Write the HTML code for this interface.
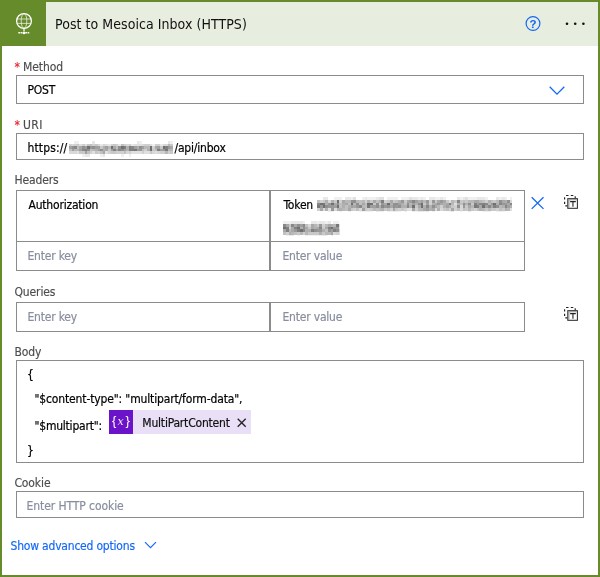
<!DOCTYPE html>
<html>
<head>
<meta charset="utf-8">
<title>Post to Mesoica Inbox (HTTPS)</title>
<style>
html,body{margin:0;padding:0;background:#fff;}
body{width:600px;height:577px;overflow:hidden;position:relative;
  font-family:"DejaVu Sans Condensed","Liberation Sans",sans-serif;font-size:12px;letter-spacing:-0.2px;color:#000;}
#wrap{position:absolute;left:0;top:0;width:600px;height:577px;will-change:transform;}
.abs{position:absolute;}
#card{position:absolute;left:0;top:0;width:596px;height:573px;border:2px solid #668b2b;background:#fff;}
#hdr{position:absolute;left:0;top:0;width:600px;height:46px;background:#e8eedf;border:2px solid #668b2b;border-bottom:0;box-sizing:border-box;}
#ico{position:absolute;left:0;top:0;width:46px;height:46px;background:#668b2b;}
#title{position:absolute;left:55px;top:14px;font-size:14px;line-height:20px;letter-spacing:0.05px;color:#111;white-space:nowrap;}
.lbl{position:absolute;left:14.4px;line-height:16px;color:#4d4d4d;letter-spacing:-0.1px;-webkit-text-stroke:0.15px currentColor;white-space:nowrap;}
.req{color:#e8212b;}
.box{position:absolute;box-sizing:border-box;border:1px solid #8b8b8b;background:#fff;}
.txt{position:absolute;line-height:16px;white-space:nowrap;color:#000;-webkit-text-stroke:0.2px currentColor;}
.ph{color:#888e9e;}
a.adv{position:absolute;left:10.5px;top:538.2px;line-height:16px;color:#1267f8;letter-spacing:-0.2px;-webkit-text-stroke:0.15px currentColor;text-decoration:none;white-space:nowrap;}
</style>
</head>
<body>
<div id="wrap">
<div id="card"></div>
<div id="hdr"></div>
<div id="ico">
<svg class="abs" style="left:0;top:0" width="46" height="46" viewBox="0 0 46 46" fill="none" stroke="#fff" stroke-width="1.3">
<circle cx="24" cy="21" r="7.4"/>
<ellipse cx="24" cy="21" rx="2.8" ry="7.4" stroke-width="0.8" opacity="0.85"/>
<path d="M17.2 19h13.6M17.2 23.4h13.6" stroke-width="0.8" opacity="0.85"/>
<path d="M24 28.4v3" stroke-width="1.3"/>
<path d="M18.3 32.7h11" stroke-width="1.4" stroke-dasharray="1.8 0.5" opacity="0.95"/>
<circle cx="24" cy="33" r="1.3" fill="#fff" stroke="none"/>
</svg>
</div>
<div id="title">Post to Mesoica Inbox (HTTPS)</div>
<svg class="abs" style="left:520px;top:10px" width="74" height="28" viewBox="520 10 74 28">
<circle cx="533" cy="23.5" r="6.9" fill="none" stroke="#1267f8" stroke-width="1.2"/>
<text x="533" y="28.1" text-anchor="middle" font-family="Liberation Sans, sans-serif" font-weight="bold" font-size="11.5" letter-spacing="0" fill="#1267f8">?</text>
<circle cx="567" cy="23.8" r="1.3" fill="#111"/>
<circle cx="575.2" cy="23.8" r="1.3" fill="#111"/>
<circle cx="583.4" cy="23.8" r="1.3" fill="#111"/>
</svg>

<div class="lbl" style="top:59px"><span class="req">*</span>&nbsp;Method</div>
<div class="box" style="left:16px;top:75px;width:568px;height:29px"></div>
<div class="txt" style="left:27.5px;top:82px">POST</div>
<svg class="abs" style="left:547px;top:84px" width="20" height="14" viewBox="547 84 20 14"><path d="M549.7 86.8l7.3 7.3l7.3-7.3" fill="none" stroke="#1267f8" stroke-width="1.3"/></svg>

<div class="lbl" style="top:117px"><span class="req">*</span>&nbsp;<span style="letter-spacing:0.4px">URI</span></div>
<div class="box" style="left:16px;top:133px;width:568px;height:27px"></div>
<div class="txt" style="left:27.4px;top:139.5px;letter-spacing:0.15px">https://</div>
<div class="txt" style="left:174.5px;top:139.5px">/api/inbox</div>

<div class="lbl" style="top:171.5px">Headers</div>
<div class="box" style="left:16px;top:190px;width:254px;height:52px"></div>
<div class="box" style="left:270px;top:190px;width:255px;height:52px"></div>
<div class="box" style="left:16px;top:241px;width:254px;height:30px"></div>
<div class="box" style="left:270px;top:241px;width:255px;height:30px"></div>
<div class="txt" style="left:28.5px;top:196.5px">Authorization</div>
<div class="txt" style="left:283.5px;top:196.5px">Token</div>
<div class="txt ph" style="left:27.5px;top:247.5px">Enter key</div>
<div class="txt ph" style="left:282.5px;top:247.5px">Enter value</div>

<div class="lbl" style="top:283.5px">Queries</div>
<div class="box" style="left:16px;top:302px;width:254px;height:30px"></div>
<div class="box" style="left:270px;top:302px;width:255px;height:30px"></div>
<div class="txt ph" style="left:27.5px;top:308.5px">Enter key</div>
<div class="txt ph" style="left:282.5px;top:308.5px">Enter value</div>

<div class="lbl" style="top:344px">Body</div>
<div class="box" style="left:16px;top:360px;width:568px;height:103px"></div>
<div class="txt" style="left:27px;top:367px">{</div>
<div class="txt" style="left:34.5px;top:391px;letter-spacing:-0.14px">"$content-type": "multipart/form-data",</div>
<div class="txt" style="left:34.5px;top:417.5px;letter-spacing:-0.22px">"$multipart":</div>
<div class="abs" style="left:109px;top:410px;width:24px;height:24px;background:#6b13c8"></div>
<div class="abs" style="left:133px;top:410px;width:118px;height:24px;background:#e9dff6"></div>
<svg class="abs" style="left:109px;top:410px" width="24" height="24" viewBox="109 410 24 24" fill="#fff">
<text x="112.1" y="425.2" font-family="Liberation Sans, sans-serif" font-size="13" letter-spacing="0">{</text>
<text x="117.6" y="425.1" font-family="DejaVu Serif, Liberation Serif, serif" font-style="italic" font-size="11" letter-spacing="0" opacity="0.92">x</text>
<text x="125.5" y="425.2" font-family="Liberation Sans, sans-serif" font-size="13" letter-spacing="0">}</text>
</svg>
<div class="txt" style="left:142.3px;top:414.5px;color:#111">MultiPartContent</div>
<svg class="abs" style="left:235px;top:416px" width="14" height="14" viewBox="235 416 14 14"><path d="M237.7 418.8l8 8M245.7 418.8l-8 8" fill="none" stroke="#222" stroke-width="1.3"/></svg>
<div class="txt" style="left:27px;top:443px">}</div>

<div class="lbl" style="top:474.5px">Cookie</div>
<div class="box" style="left:16px;top:491px;width:568px;height:27px"></div>
<div class="txt ph" style="left:26.5px;top:498px;letter-spacing:-0.08px">Enter HTTP cookie</div>

<!--MOSAIC--><svg class="abs" style="left:0;top:0" width="600" height="577" viewBox="0 0 600 577" shape-rendering="crispEdges"><path fill="#707070" d="M87 146h3v3h-3zM111 146h2v3h-2zM121 146h3v3h-3zM150 146h2v3h-2zM163 146h2v3h-2zM150 149h2v2h-2z"/><path fill="#787878" d="M134 149h3v2h-3zM165 149h3v2h-3z"/><path fill="#808080" d="M124 146h2v3h-2zM129 146h2v3h-2zM165 146h3v3h-3zM85 149h2v2h-2zM113 149h3v2h-3zM129 149h2v2h-2zM131 149h3v2h-3zM157 149h3v2h-3z"/><path fill="#888888" d="M74 146h3v3h-3zM131 146h3v3h-3zM82 149h3v2h-3zM118 149h3v2h-3z"/><path fill="#909090" d="M72 146h2v3h-2zM82 146h3v3h-3zM92 146h3v3h-3zM118 146h3v3h-3zM139 146h3v3h-3zM87 149h3v2h-3zM100 149h3v2h-3zM121 149h3v2h-3z"/><path fill="#989898" d="M90 146h2v3h-2zM168 146h2v3h-2zM139 149h3v2h-3zM163 149h2v2h-2z"/><path fill="#a0a0a0" d="M69 146h3v3h-3zM85 146h2v3h-2zM95 146h3v3h-3zM98 146h2v3h-2zM105 146h3v3h-3zM134 146h3v3h-3zM142 146h2v3h-2zM157 146h3v3h-3zM72 149h2v2h-2zM79 149h3v2h-3zM98 149h2v2h-2zM111 149h2v2h-2zM124 149h2v2h-2zM137 149h2v2h-2zM160 149h3v2h-3zM85 151h2v3h-2z"/><path fill="#a8a8a8" d="M79 146h3v3h-3zM113 146h3v3h-3zM155 146h2v3h-2zM170 146h3v3h-3zM105 149h3v2h-3zM116 149h2v2h-2zM103 151h2v3h-2z"/><path fill="#b0b0b0" d="M103 146h2v3h-2zM126 146h3v3h-3zM137 146h2v3h-2zM95 149h3v2h-3zM103 149h2v2h-2zM126 149h3v2h-3zM147 149h3v2h-3z"/><path fill="#b8b8b8" d="M168 144h2v2h-2zM108 146h3v3h-3zM144 146h3v3h-3zM147 146h3v3h-3zM74 149h3v2h-3zM77 149h2v2h-2zM92 149h3v2h-3zM168 149h2v2h-2zM170 149h3v2h-3zM165 151h3v3h-3z"/><path fill="#c0c0c0" d="M90 144h2v2h-2zM121 144h3v2h-3zM77 146h2v3h-2zM116 146h2v3h-2zM69 149h3v2h-3zM90 149h2v2h-2zM142 149h2v2h-2zM155 149h2v2h-2zM87 151h3v3h-3zM100 151h3v3h-3zM124 151h2v3h-2z"/><path fill="#c8c8c8" d="M77 144h2v2h-2zM87 144h3v2h-3zM95 144h3v2h-3zM113 144h3v2h-3zM170 144h3v2h-3zM100 146h3v3h-3zM160 146h3v3h-3zM108 149h3v2h-3zM152 149h3v2h-3zM79 151h3v3h-3zM82 151h3v3h-3zM95 151h3v3h-3zM111 151h2v3h-2zM113 151h3v3h-3zM150 151h2v3h-2zM170 151h3v3h-3z"/><path fill="#d0d0d0" d="M69 144h3v2h-3zM74 144h3v2h-3zM82 144h3v2h-3zM92 144h3v2h-3zM111 144h2v2h-2zM116 144h2v2h-2zM124 144h2v2h-2zM129 144h2v2h-2zM144 144h3v2h-3zM147 144h3v2h-3zM155 144h2v2h-2zM157 144h3v2h-3zM152 146h3v3h-3zM144 149h3v2h-3zM90 151h2v3h-2zM98 151h2v3h-2zM108 151h3v3h-3zM116 151h2v3h-2zM118 151h3v3h-3zM121 151h3v3h-3zM129 151h2v3h-2zM142 151h2v3h-2zM160 151h3v3h-3zM163 151h2v3h-2zM168 151h2v3h-2z"/><path fill="#d8d8d8" d="M72 144h2v2h-2zM98 144h2v2h-2zM103 144h2v2h-2zM126 144h3v2h-3zM142 144h2v2h-2zM163 144h2v2h-2zM165 144h3v2h-3zM69 151h3v3h-3zM72 151h2v3h-2zM74 151h3v3h-3zM126 151h3v3h-3zM152 151h3v3h-3zM157 151h3v3h-3z"/><path fill="#e0e0e0" d="M79 144h3v2h-3zM85 144h2v2h-2zM105 144h3v2h-3zM134 144h3v2h-3zM137 144h2v2h-2zM139 144h3v2h-3zM150 144h2v2h-2zM77 151h2v3h-2zM92 151h3v3h-3zM105 151h3v3h-3zM131 151h3v3h-3zM134 151h3v3h-3zM137 151h2v3h-2zM139 151h3v3h-3zM144 151h3v3h-3zM147 151h3v3h-3zM155 151h2v3h-2z"/><path fill="#e8e8e8" d="M92 141h3v3h-3zM137 141h2v3h-2zM168 141h2v3h-2zM100 144h3v2h-3zM108 144h3v2h-3zM118 144h3v2h-3zM131 144h3v2h-3zM160 144h3v2h-3zM85 154h2v3h-2zM87 154h3v3h-3zM103 154h2v3h-2z"/><path fill="#f0f0f0" d="M74 141h3v3h-3zM77 141h2v3h-2zM139 141h3v3h-3zM170 141h3v3h-3zM152 144h3v2h-3zM82 154h3v3h-3zM100 154h3v3h-3zM121 154h3v3h-3zM129 154h2v3h-2z"/><path fill="#707070" d="M337 200h2v3h-2zM320 203h3v2h-3zM331 203h3v2h-3zM351 203h2v2h-2zM367 203h3v2h-3zM370 203h3v2h-3zM387 203h3v2h-3zM421 203h2v2h-2zM493 203h3v2h-3zM323 205h2v3h-2zM337 205h2v3h-2zM412 205h3v3h-3zM421 205h2v3h-2zM482 205h3v3h-3z"/><path fill="#787878" d="M323 203h2v2h-2zM317 205h3v3h-3zM367 205h3v3h-3zM474 205h3v3h-3z"/><path fill="#808080" d="M381 200h3v3h-3zM449 203h2v2h-2zM474 203h3v2h-3zM482 203h3v2h-3zM477 205h2v3h-2zM493 205h3v3h-3z"/><path fill="#888888" d="M412 200h3v3h-3zM457 200h3v3h-3zM317 203h3v2h-3zM479 203h3v2h-3zM485 203h3v2h-3zM499 203h3v2h-3zM510 203h2v2h-2zM359 205h3v3h-3zM381 205h3v3h-3zM407 205h2v3h-2zM426 205h3v3h-3zM488 205h3v3h-3zM505 205h2v3h-2z"/><path fill="#909090" d="M351 200h2v3h-2zM353 200h3v3h-3zM499 200h3v3h-3zM507 200h3v3h-3zM337 203h2v2h-2zM356 203h3v2h-3zM376 203h3v2h-3zM393 203h2v2h-2zM395 203h3v2h-3zM407 203h2v2h-2zM418 203h3v2h-3zM463 203h2v2h-2zM468 203h3v2h-3zM325 205h3v3h-3zM376 205h3v3h-3zM387 205h3v3h-3zM393 205h2v3h-2zM398 205h3v3h-3zM432 205h3v3h-3zM457 205h3v3h-3zM496 205h3v3h-3z"/><path fill="#989898" d="M401 200h3v3h-3zM426 200h3v3h-3zM432 200h3v3h-3zM440 200h3v3h-3zM328 203h3v2h-3zM381 203h3v2h-3zM437 203h3v2h-3zM491 203h2v2h-2zM502 203h3v2h-3zM505 203h2v2h-2zM320 205h3v3h-3zM328 205h3v3h-3zM331 205h3v3h-3zM356 205h3v3h-3zM384 205h3v3h-3zM395 205h3v3h-3zM463 205h2v3h-2zM331 208h3v3h-3z"/><path fill="#a0a0a0" d="M409 200h3v3h-3zM415 200h3v3h-3zM421 200h2v3h-2zM398 203h3v2h-3zM412 203h3v2h-3zM426 203h3v2h-3zM477 203h2v2h-2zM334 205h3v3h-3zM351 205h2v3h-2zM370 205h3v3h-3zM373 205h3v3h-3zM446 205h3v3h-3zM485 205h3v3h-3zM507 205h3v3h-3zM362 208h3v3h-3zM426 208h3v3h-3z"/><path fill="#a8a8a8" d="M342 200h3v3h-3zM373 200h3v3h-3zM390 200h3v3h-3zM407 200h2v3h-2zM437 200h3v3h-3zM443 200h3v3h-3zM474 200h3v3h-3zM477 200h2v3h-2zM502 200h3v3h-3zM334 203h3v2h-3zM345 203h3v2h-3zM362 203h3v2h-3zM384 203h3v2h-3zM435 203h2v2h-2zM440 203h3v2h-3zM446 203h3v2h-3zM507 203h3v2h-3zM353 205h3v3h-3zM390 205h3v3h-3zM418 205h3v3h-3zM435 205h2v3h-2zM468 205h3v3h-3zM479 205h3v3h-3zM491 205h2v3h-2zM320 208h3v3h-3zM348 208h3v3h-3zM393 208h2v3h-2zM412 208h3v3h-3zM423 208h3v3h-3zM432 208h3v3h-3zM451 208h3v3h-3z"/><path fill="#b0b0b0" d="M325 200h3v3h-3zM331 200h3v3h-3zM367 200h3v3h-3zM379 200h2v3h-2zM398 200h3v3h-3zM418 200h3v3h-3zM488 200h3v3h-3zM505 200h2v3h-2zM325 203h3v2h-3zM342 203h3v2h-3zM390 203h3v2h-3zM401 203h3v2h-3zM415 203h3v2h-3zM432 203h3v2h-3zM443 203h3v2h-3zM457 203h3v2h-3zM465 203h3v2h-3zM496 203h3v2h-3zM342 205h3v3h-3zM348 205h3v3h-3zM379 205h2v3h-2zM401 205h3v3h-3zM404 205h3v3h-3zM409 205h3v3h-3zM423 205h3v3h-3zM429 205h3v3h-3zM443 205h3v3h-3zM449 205h2v3h-2zM502 205h3v3h-3zM510 205h2v3h-2zM325 208h3v3h-3zM337 208h2v3h-2zM339 208h3v3h-3zM381 208h3v3h-3zM429 208h3v3h-3zM437 208h3v3h-3zM479 208h3v3h-3zM505 208h2v3h-2z"/><path fill="#b8b8b8" d="M345 200h3v3h-3zM348 200h3v3h-3zM356 200h3v3h-3zM362 200h3v3h-3zM423 200h3v3h-3zM451 200h3v3h-3zM468 200h3v3h-3zM471 200h3v3h-3zM479 200h3v3h-3zM496 200h3v3h-3zM353 203h3v2h-3zM409 203h3v2h-3zM451 203h3v2h-3zM488 203h3v2h-3zM362 205h3v3h-3zM437 205h3v3h-3zM471 205h3v3h-3zM499 205h3v3h-3zM342 208h3v3h-3zM373 208h3v3h-3zM379 208h2v3h-2zM418 208h3v3h-3zM421 208h2v3h-2zM468 208h3v3h-3zM482 208h3v3h-3zM488 208h3v3h-3zM507 208h3v3h-3z"/><path fill="#c0c0c0" d="M317 200h3v3h-3zM359 200h3v3h-3zM376 200h3v3h-3zM395 200h3v3h-3zM463 200h2v3h-2zM482 200h3v3h-3zM491 200h2v3h-2zM339 203h3v2h-3zM348 203h3v2h-3zM359 203h3v2h-3zM365 203h2v2h-2zM404 203h3v2h-3zM460 203h3v2h-3zM339 205h3v3h-3zM345 205h3v3h-3zM365 205h2v3h-2zM345 208h3v3h-3zM356 208h3v3h-3zM376 208h3v3h-3zM387 208h3v3h-3zM446 208h3v3h-3zM457 208h3v3h-3zM463 208h2v3h-2zM477 208h2v3h-2zM499 208h3v3h-3z"/><path fill="#c8c8c8" d="M323 200h2v3h-2zM334 200h3v3h-3zM370 200h3v3h-3zM387 200h3v3h-3zM393 200h2v3h-2zM404 200h3v3h-3zM435 200h2v3h-2zM446 200h3v3h-3zM454 200h3v3h-3zM460 200h3v3h-3zM465 200h3v3h-3zM493 200h3v3h-3zM373 203h3v2h-3zM423 203h3v2h-3zM471 203h3v2h-3zM415 205h3v3h-3zM451 205h3v3h-3zM465 205h3v3h-3zM351 208h2v3h-2zM365 208h2v3h-2zM370 208h3v3h-3zM384 208h3v3h-3zM395 208h3v3h-3zM401 208h3v3h-3zM443 208h3v3h-3zM465 208h3v3h-3zM471 208h3v3h-3zM485 208h3v3h-3zM491 208h2v3h-2zM493 208h3v3h-3zM502 208h3v3h-3z"/><path fill="#d0d0d0" d="M320 200h3v3h-3zM339 200h3v3h-3zM365 200h2v3h-2zM384 200h3v3h-3zM429 200h3v3h-3zM485 200h3v3h-3zM379 203h2v2h-2zM429 203h3v2h-3zM440 205h3v3h-3zM454 205h3v3h-3zM317 208h3v3h-3zM353 208h3v3h-3zM367 208h3v3h-3zM390 208h3v3h-3zM398 208h3v3h-3zM404 208h3v3h-3zM415 208h3v3h-3zM449 208h2v3h-2zM454 208h3v3h-3zM474 208h3v3h-3zM496 208h3v3h-3z"/><path fill="#d8d8d8" d="M328 200h3v3h-3zM510 200h2v3h-2zM460 205h3v3h-3zM323 208h2v3h-2zM334 208h3v3h-3zM359 208h3v3h-3zM435 208h2v3h-2zM440 208h3v3h-3zM460 208h3v3h-3z"/><path fill="#e0e0e0" d="M353 197h3v3h-3zM379 197h2v3h-2zM381 197h3v3h-3zM409 197h3v3h-3zM465 197h3v3h-3zM449 200h2v3h-2zM454 203h3v2h-3zM328 208h3v3h-3zM407 208h2v3h-2zM409 208h3v3h-3zM510 208h2v3h-2z"/><path fill="#e8e8e8" d="M323 197h2v3h-2zM325 197h3v3h-3zM345 197h3v3h-3zM348 197h3v3h-3zM365 197h2v3h-2zM376 197h3v3h-3zM412 197h3v3h-3zM415 197h3v3h-3zM421 197h2v3h-2zM429 197h3v3h-3zM432 197h3v3h-3zM440 197h3v3h-3zM457 197h3v3h-3zM463 197h2v3h-2zM477 197h2v3h-2zM479 197h3v3h-3zM482 197h3v3h-3zM496 197h3v3h-3zM502 197h3v3h-3zM376 211h3v1h-3zM418 211h3v1h-3zM421 211h2v1h-2zM426 211h3v1h-3zM451 211h3v1h-3zM468 211h3v1h-3z"/><path fill="#f0f0f0" d="M334 197h3v3h-3zM337 197h2v3h-2zM339 197h3v3h-3zM351 197h2v3h-2zM362 197h3v3h-3zM367 197h3v3h-3zM370 197h3v3h-3zM373 197h3v3h-3zM387 197h3v3h-3zM390 197h3v3h-3zM393 197h2v3h-2zM395 197h3v3h-3zM401 197h3v3h-3zM404 197h3v3h-3zM407 197h2v3h-2zM418 197h3v3h-3zM423 197h3v3h-3zM435 197h2v3h-2zM437 197h3v3h-3zM443 197h3v3h-3zM460 197h3v3h-3zM468 197h3v3h-3zM471 197h3v3h-3zM474 197h3v3h-3zM485 197h3v3h-3zM499 197h3v3h-3zM505 197h2v3h-2zM510 197h2v3h-2zM328 211h3v1h-3zM331 211h3v1h-3zM339 211h3v1h-3zM348 211h3v1h-3zM359 211h3v1h-3zM362 211h3v1h-3zM365 211h2v1h-2zM367 211h3v1h-3zM370 211h3v1h-3zM379 211h2v1h-2zM381 211h3v1h-3zM387 211h3v1h-3zM390 211h3v1h-3zM393 211h2v1h-2zM395 211h3v1h-3zM398 211h3v1h-3zM404 211h3v1h-3zM412 211h3v1h-3zM415 211h3v1h-3zM423 211h3v1h-3zM432 211h3v1h-3zM449 211h2v1h-2zM460 211h3v1h-3zM482 211h3v1h-3zM485 211h3v1h-3zM488 211h3v1h-3zM496 211h3v1h-3zM499 211h3v1h-3zM502 211h3v1h-3z"/><path fill="#707070" d="M283 227h3v2h-3zM297 227h3v2h-3zM331 227h2v2h-2zM300 229h3v3h-3z"/><path fill="#787878" d="M336 224h3v3h-3z"/><path fill="#808080" d="M286 227h3v2h-3zM294 227h3v2h-3zM328 227h3v2h-3zM286 229h3v3h-3zM297 229h3v3h-3zM311 229h3v3h-3zM333 229h3v3h-3z"/><path fill="#888888" d="M283 224h3v3h-3zM291 224h3v3h-3zM303 224h2v3h-2zM319 227h3v2h-3zM303 229h2v3h-2z"/><path fill="#909090" d="M297 224h3v3h-3zM303 227h2v2h-2zM314 229h3v3h-3zM328 229h3v3h-3zM336 229h3v3h-3z"/><path fill="#989898" d="M319 224h3v3h-3zM333 227h3v2h-3zM336 227h3v2h-3zM294 229h3v3h-3zM317 229h2v3h-2zM319 229h3v3h-3z"/><path fill="#a0a0a0" d="M300 224h3v3h-3zM331 229h2v3h-2z"/><path fill="#a8a8a8" d="M286 224h3v3h-3zM294 224h3v3h-3zM311 224h3v3h-3zM328 224h3v3h-3zM291 227h3v2h-3zM305 227h3v2h-3zM311 227h3v2h-3zM317 227h2v2h-2zM325 227h3v2h-3zM283 229h3v3h-3zM291 229h3v3h-3zM331 232h2v3h-2z"/><path fill="#b0b0b0" d="M331 224h2v3h-2zM300 227h3v2h-3zM314 227h3v2h-3zM305 229h3v3h-3zM308 229h3v3h-3zM322 229h3v3h-3zM289 232h2v3h-2zM319 232h3v3h-3z"/><path fill="#b8b8b8" d="M314 224h3v3h-3zM325 224h3v3h-3zM333 224h3v3h-3zM289 229h2v3h-2zM291 232h3v3h-3zM300 232h3v3h-3zM305 232h3v3h-3zM325 232h3v3h-3zM328 232h3v3h-3z"/><path fill="#c0c0c0" d="M305 224h3v3h-3zM325 229h3v3h-3zM283 232h3v3h-3zM294 232h3v3h-3z"/><path fill="#c8c8c8" d="M289 224h2v3h-2zM317 224h2v3h-2zM308 227h3v2h-3zM322 227h3v2h-3zM297 232h3v3h-3zM308 232h3v3h-3zM311 232h3v3h-3zM314 232h3v3h-3zM317 232h2v3h-2zM322 232h3v3h-3z"/><path fill="#d0d0d0" d="M322 224h3v3h-3zM289 227h2v2h-2zM339 229h1v3h-1zM286 232h3v3h-3zM303 232h2v3h-2zM336 232h3v3h-3z"/><path fill="#d8d8d8" d="M308 224h3v3h-3zM333 232h3v3h-3z"/><path fill="#e0e0e0" d="M339 224h1v3h-1zM339 232h1v3h-1z"/><path fill="#e8e8e8" d="M291 221h3v3h-3zM294 221h3v3h-3zM297 221h3v3h-3zM300 221h3v3h-3zM311 221h3v3h-3zM314 221h3v3h-3zM319 221h3v3h-3zM322 221h3v3h-3zM328 221h3v3h-3zM339 227h1v2h-1zM289 235h2v1h-2zM291 235h3v1h-3zM322 235h3v1h-3z"/><path fill="#f0f0f0" d="M283 221h3v3h-3zM286 221h3v3h-3zM289 221h2v3h-2zM303 221h2v3h-2zM317 221h2v3h-2zM325 221h3v3h-3zM333 221h3v3h-3zM336 221h3v3h-3zM286 235h3v1h-3zM297 235h3v1h-3zM305 235h3v1h-3zM308 235h3v1h-3zM311 235h3v1h-3zM314 235h3v1h-3zM317 235h2v1h-2zM319 235h3v1h-3zM325 235h3v1h-3zM331 235h2v1h-2z"/></svg><!--/MOSAIC-->
<a class="adv">Show advanced options</a>
<svg class="abs" style="left:143px;top:538px" width="18" height="14" viewBox="143 538 18 14"><path d="M145 542.1l5.5 5.5l5.5-5.5" fill="none" stroke="#1267f8" stroke-width="1.15"/></svg>

<svg class="abs" style="left:528px;top:192px" width="56" height="22" viewBox="528 192 56 22">
<path d="M531.7 197.3l11.8 11.6M543.5 197.3l-11.8 11.6" fill="none" stroke="#1267f8" stroke-width="1.3"/>
<path d="M566 195.5h2.5M570.8 195.5h2.5M564.6 197.2v2.4M564.6 201.8v2.3M575.2 196.2v2.2M565.3 205.8h2" fill="none" stroke="#222" stroke-width="1.15"/>
<rect x="567.8" y="198.7" width="9.6" height="9.6" fill="#fff" stroke="#2a2a2a" stroke-width="1.05"/>
<path d="M568.9 207.6v-7.8h7.8" fill="none" stroke="#8a8a8a" stroke-width="0.9"/>
<path d="M570.1 201.6h5.7M572.95 201.6v5.2" fill="none" stroke="#222" stroke-width="1.1"/>
</svg>
<svg class="abs" style="left:560px;top:304px" width="24" height="22" viewBox="560 192 24 22">
<path d="M566 195.5h2.5M570.8 195.5h2.5M564.6 197.2v2.4M564.6 201.8v2.3M575.2 196.2v2.2M565.3 205.8h2" fill="none" stroke="#222" stroke-width="1.15"/>
<rect x="567.8" y="198.7" width="9.6" height="9.6" fill="#fff" stroke="#2a2a2a" stroke-width="1.05"/>
<path d="M568.9 207.6v-7.8h7.8" fill="none" stroke="#8a8a8a" stroke-width="0.9"/>
<path d="M570.1 201.6h5.7M572.95 201.6v5.2" fill="none" stroke="#222" stroke-width="1.1"/>
</svg>
</div>
</body>
</html>
